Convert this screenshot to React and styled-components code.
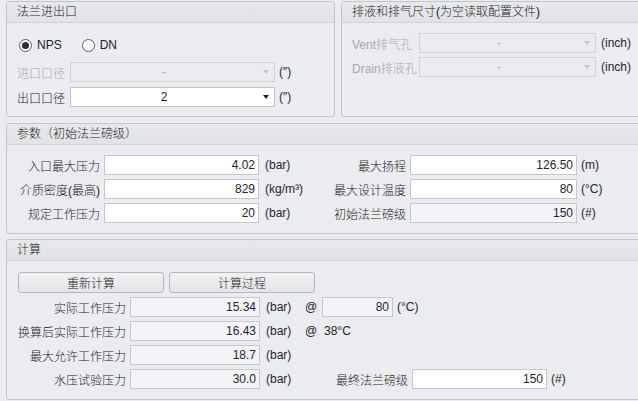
import styled, { createGlobalStyle } from 'styled-components';

const GlobalStyle = createGlobalStyle`
  html, body {
    margin: 0;
    padding: 0;
    overflow: hidden;
    background: #ebecef;
  }
  body {
    font-family: 'Liberation Sans', 'Noto Sans CJK SC', sans-serif;
    font-size: 12px;
    font-weight: 300;
    color: #1f2229;
  }
`;

// layout
const Page = styled.div`
  width: 660px;
  padding: 1px 0 0 6px;
  display: flex;
  flex-direction: column;
  gap: 5px;
`;

const TopRow = styled.div`
  display: grid;
  grid-template-columns: 329px 1fr;
  column-gap: 6px;
  margin-bottom: 1px;
`;

const Panel = styled.section`
  border: 1px solid #c4c5ca;
  border-radius: 3px;
  background: #ebecef;
  overflow: hidden;
`;

const PanelHeader = styled.header`
  height: 20px;
  line-height: 20px;
  padding-left: 10px;
  background: linear-gradient(#e7e8eb, #e1e2e6);
  border-bottom: 1px solid #d1d2d6;
  color: #1c1e24;
`;

const PanelBody = styled.div`
  display: flex;
  flex-direction: column;
  gap: ${({ $gap }) => $gap}px;
  padding: ${({ $top }) => $top}px 10px ${({ $bottom }) => $bottom}px 10px;
`;

// radios
const RadioRow = styled.div`
  display: flex;
  align-items: center;
  height: 16px;
  padding-left: 2px;
  margin-bottom: 4px;
`;

const RadioItem = styled.label`
  display: flex;
  align-items: center;
  gap: 5px;
  margin-right: 20px;
`;

const RadioCircle = styled.span`
  width: 11px;
  height: 11px;
  border: 1px solid #5c5f66;
  border-radius: 50%;
  background: #fafafb;
  display: flex;
  align-items: center;
  justify-content: center;

  &::after {
    content: '';
    width: 7px;
    height: 7px;
    border-radius: 50%;
    background: ${({ $checked }) => ($checked ? '#2b2e35' : 'transparent')};
  }
`;

// form rows
const FormRow = styled.div`
  display: flex;
  align-items: center;
  height: 20px;
  gap: 4px;
`;

const Label = styled.span`
  width: ${({ $w }) => $w}px;
  flex: none;
  white-space: nowrap;
  text-align: ${({ $right }) => ($right ? 'right' : 'left')};
  color: ${({ $disabled }) => ($disabled ? '#a7a8af' : '#1f2229')};
`;

const Combo = styled.div`
  width: ${({ $w }) => $w}px;
  height: 20px;
  box-sizing: border-box;
  flex: none;
  display: flex;
  align-items: center;
  border: 1px solid ${({ $disabled }) => ($disabled ? '#d0d1d5' : '#c2c3c8')};
  background: ${({ $disabled }) => ($disabled ? '#ebecef' : '#ffffff')};
  color: ${({ $disabled }) => ($disabled ? '#a7a8af' : '#1f2229')};
`;

const ComboValue = styled.span`
  flex: 1;
  text-align: center;
`;

const ComboArrow = styled.span`
  width: 17px;
  display: flex;
  justify-content: center;

  &::after {
    content: '';
    border-left: 3px solid transparent;
    border-right: 3px solid transparent;
    border-top: 4px solid ${({ $disabled }) => ($disabled ? '#c4c5ca' : '#222')};
  }
`;

const Unit = styled.span`
  white-space: nowrap;
  width: ${({ $w }) => ($w ? `${$w}px` : 'auto')};
  flex: none;
  padding-left: ${({ $pad }) => $pad || 0}px;
  color: #1f2533;
`;

const Field = styled.div`
  width: ${({ $w }) => $w}px;
  height: 20px;
  line-height: 18px;
  box-sizing: border-box;
  flex: none;
  border: 1px solid #c6c7cc;
  background: ${({ $readOnly }) => ($readOnly ? '#f3f4f6' : '#ffffff')};
  text-align: right;
  padding-right: 3px;
  color: #1f2533;
`;

// param grid
const ParamGrid = styled.div`
  display: grid;
  grid-template-columns: 93px 155px 63px 76px 167px auto;
  grid-auto-rows: 20px;
  column-gap: 4px;
  row-gap: 4px;
  align-items: center;
  margin-left: -10px;
`;

const GridLabel = styled.span`
  text-align: right;
  white-space: nowrap;
`;

// calc
const ButtonRow = styled.div`
  display: flex;
  gap: 5px;
  padding-left: 1px;
`;

const Button = styled.button`
  width: 146px;
  height: 21px;
  padding: 0;
  font: inherit;
  color: #1f2229;
  border: 1px solid #b5b6bb;
  border-radius: 3px;
  background: linear-gradient(#f1f1f3, #e3e4e7);
`;

const CalcRows = styled.div`
  display: flex;
  flex-direction: column;
  gap: 4px;
  margin-left: -10px;
`;

const At = styled.span`
  width: 13px;
  flex: none;
`;

const PlainText = styled.span`
  padding-left: 2px;
`;

const Radio = ({ checked, children }) => (
  <RadioItem>
    <RadioCircle $checked={checked} />
    {children}
  </RadioItem>
);

const Select = ({ w, value, disabled }) => (
  <Combo $w={w} $disabled={disabled}>
    <ComboValue>{value}</ComboValue>
    <ComboArrow $disabled={disabled} />
  </Combo>
);

const params = [
  ['入口最大压力', '4.02', '(bar)', '最大扬程', '126.50', '(m)', false],
  ['介质密度(最高)', '829', '(kg/m³)', '最大设计温度', '80', '(°C)', false],
  ['规定工作压力', '20', '(bar)', '初始法兰磅级', '150', '(#)', true],
];

const App = () => {
  return (
    <>
      <GlobalStyle />
      <Page>
        <TopRow>
          <Panel>
            <PanelHeader>法兰进出口</PanelHeader>
            <PanelBody $top={14} $bottom={9} $gap={5}>
              <RadioRow>
                <Radio checked>NPS</Radio>
                <Radio>DN</Radio>
              </RadioRow>
              <FormRow>
                <Label $w={49} $disabled>进口口径</Label>
                <Select w={205} value="-" disabled />
                <Unit>(″)</Unit>
              </FormRow>
              <FormRow>
                <Label $w={49}>出口口径</Label>
                <Select w={205} value="2" />
                <Unit>(″)</Unit>
              </FormRow>
            </PanelBody>
          </Panel>
          <Panel>
            <PanelHeader>排液和排气尺寸(为空读取配置文件)</PanelHeader>
            <PanelBody $top={10} $bottom={0} $gap={4}>
              <FormRow>
                <Label $w={63} $disabled>Vent排气孔</Label>
                <Select w={177} value="-" disabled />
                <Unit $pad={1}>(inch)</Unit>
              </FormRow>
              <FormRow>
                <Label $w={63} $disabled>Drain排液孔</Label>
                <Select w={177} value="-" disabled />
                <Unit $pad={1}>(inch)</Unit>
              </FormRow>
            </PanelBody>
          </Panel>
        </TopRow>

        <Panel>
          <PanelHeader>参数（初始法兰磅级）</PanelHeader>
          <PanelBody $top={10} $bottom={10} $gap={4}>
            <ParamGrid>
              {params.map(([l1, v1, u1, l2, v2, u2, ro]) => (
                <>
                  <GridLabel key={l1}>{l1}</GridLabel>
                  <Field $w={155}>{v1}</Field>
                  <Unit $pad={2}>{u1}</Unit>
                  <GridLabel>{l2}</GridLabel>
                  <Field $w={167} $readOnly={ro}>{v2}</Field>
                  <Unit>{u2}</Unit>
                </>
              ))}
            </ParamGrid>
          </PanelBody>
        </Panel>

        <Panel>
          <PanelHeader>计算</PanelHeader>
          <PanelBody $top={11} $bottom={10} $gap={4}>
            <ButtonRow>
              <Button>重新计算</Button>
              <Button>计算过程</Button>
            </ButtonRow>
            <CalcRows>
              <FormRow>
                <Label $w={119} $right>实际工作压力</Label>
                <Field $w={130} $readOnly>15.34</Field>
                <Unit $w={35} $pad={2}>(bar)</Unit>
                <At>@</At>
                <Field $w={71} $readOnly>80</Field>
                <Unit>(°C)</Unit>
              </FormRow>
              <FormRow>
                <Label $w={119} $right>换算后实际工作压力</Label>
                <Field $w={130} $readOnly>16.43</Field>
                <Unit $w={35} $pad={2}>(bar)</Unit>
                <At>@</At>
                <PlainText>38°C</PlainText>
              </FormRow>
              <FormRow>
                <Label $w={119} $right>最大允许工作压力</Label>
                <Field $w={130} $readOnly>18.7</Field>
                <Unit $w={35} $pad={2}>(bar)</Unit>
              </FormRow>
              <FormRow>
                <Label $w={119} $right>水压试验压力</Label>
                <Field $w={130} $readOnly>30.0</Field>
                <Unit $w={35} $pad={2}>(bar)</Unit>
                <Label $w={103} $right>最终法兰磅级</Label>
                <Field $w={135}>150</Field>
                <Unit>(#)</Unit>
              </FormRow>
            </CalcRows>
          </PanelBody>
        </Panel>
      </Page>
    </>
  );
};

export default App;
